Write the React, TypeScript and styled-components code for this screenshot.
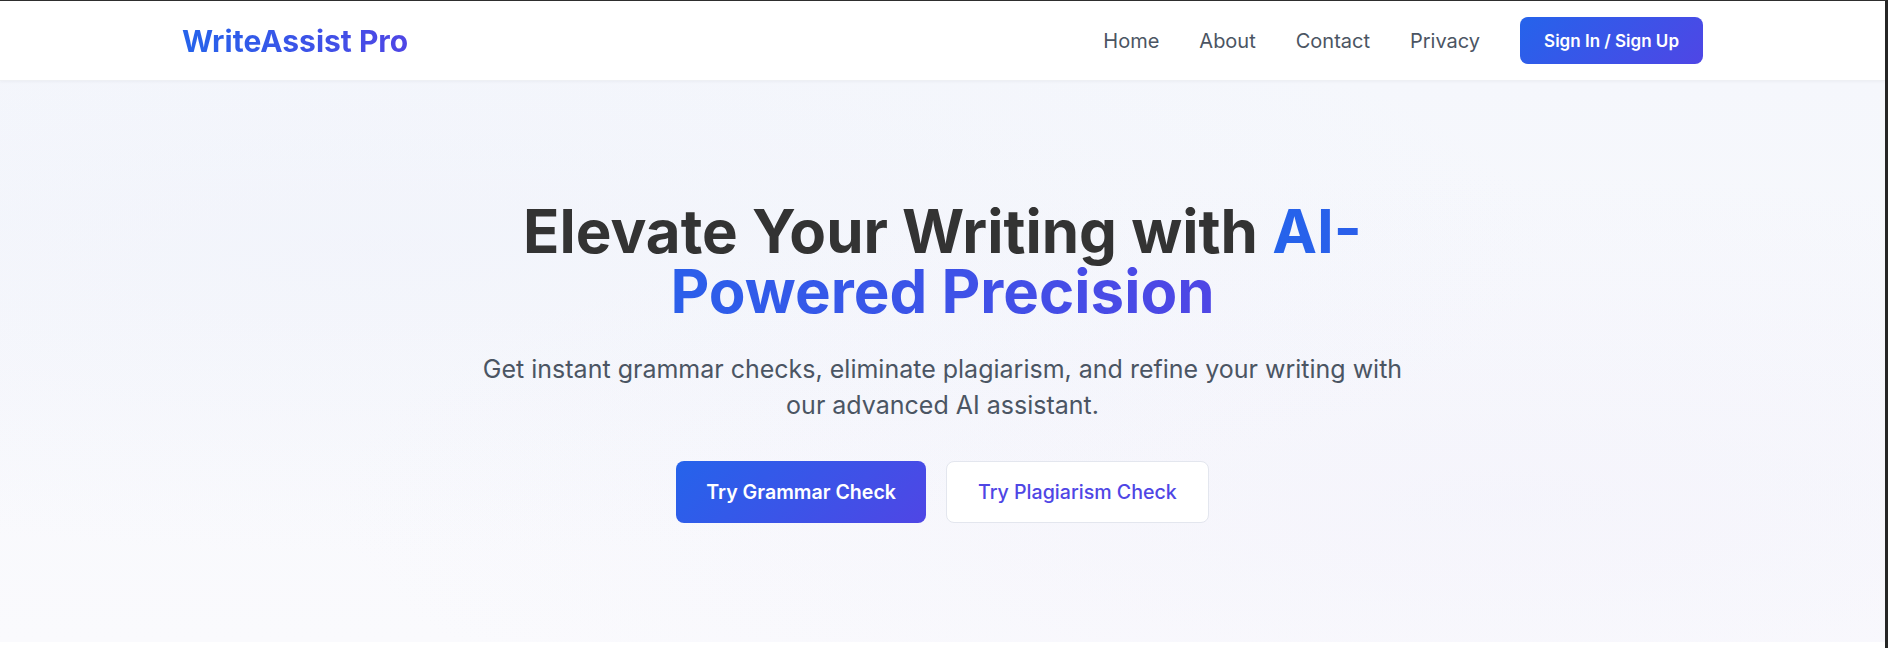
import React from "react";
import styled, { createGlobalStyle } from "styled-components";

const GlobalStyle = createGlobalStyle`
  * {
    box-sizing: border-box;
  }

  html,
  body {
    margin: 0;
    padding: 0;
    background: #ffffff;
  }

  body {
    font-family: Inter, "Noto Sans", "Liberation Sans", sans-serif;
    color: #333333;
    border-top: 1px solid #2e2e2e;
    border-right: 3px solid #262626;
    min-height: 648px;
  }
`;

export default function App() {
  return (
    <>
      <GlobalStyle />
      <Page>
        <Header>
          <HeaderInner>
            <Logo>WriteAssist Pro</Logo>
            <Nav>
              <NavLink href="#">Home</NavLink>
              <NavLink href="#">About</NavLink>
              <NavLink href="#">Contact</NavLink>
              <NavLink href="#">Privacy</NavLink>
              <SignButton>Sign In / Sign Up</SignButton>
            </Nav>
          </HeaderInner>
        </Header>

        <Hero>
          <HeroContent>
            <Title>
              Elevate Your Writing with <Accent>AI-Powered Precision</Accent>
            </Title>
            <Subtitle>
              Get instant grammar checks, eliminate plagiarism, and refine your
              writing with our advanced AI assistant.
            </Subtitle>
            <Actions>
              <PrimaryButton>Try Grammar Check</PrimaryButton>
              <SecondaryButton>Try Plagiarism Check</SecondaryButton>
            </Actions>
          </HeroContent>
        </Hero>
      </Page>
    </>
  );
}

/* ================== Styled Components ================== */

const Page = styled.div`
  width: 100%;
  display: flex;
  flex-direction: column;
`;

const Header = styled.header`
  height: 80px;
  background: #ffffff;
  border-bottom: 1px solid #eef0f4;
  box-shadow: 0 1px 3px rgba(15, 23, 42, 0.04);
  display: flex;
  justify-content: center;
  position: relative;
  z-index: 1;
`;

const HeaderInner = styled.div`
  width: 1521px;
  display: flex;
  align-items: center;
  justify-content: space-between;
`;

const Logo = styled.div`
  font-size: 30px;
  font-weight: 700;
  background: linear-gradient(90deg, #2563eb, #4f46e5);
  -webkit-background-clip: text;
  background-clip: text;
  color: transparent;
`;

const Nav = styled.nav`
  display: flex;
  align-items: center;
  gap: 40px;
`;

const NavLink = styled.a`
  font-size: 20px;
  font-weight: 400;
  color: #4b5563;
  text-decoration: none;
`;

const SignButton = styled.button`
  height: 47px;
  padding: 0 24px;
  border: none;
  border-radius: 8px;
  background: linear-gradient(135deg, #2563eb, #4f46e5);
  color: #ffffff;
  font-family: inherit;
  font-size: 17px;
  font-weight: 600;
  cursor: pointer;
`;

const Hero = styled.section`
  padding: 120px 24px 119px;
  background:
    radial-gradient(ellipse at 20% 30%, rgba(232, 236, 249, 0.3), transparent 55%),
    radial-gradient(ellipse at 80% 75%, rgba(238, 236, 250, 0.35), transparent 55%),
    linear-gradient(180deg, #f5f7fc 0%, #fafafd 100%);
  display: flex;
  justify-content: center;
`;

const HeroContent = styled.div`
  max-width: 960px;
  display: flex;
  flex-direction: column;
  align-items: center;
  text-align: center;
`;

const Title = styled.h1`
  margin: 0 0 30px;
  font-size: 60px;
  line-height: 60px;
  font-weight: 700;
  color: #333333;
`;

const Accent = styled.span`
  background: linear-gradient(90deg, #2563eb, #4f46e5);
  -webkit-background-clip: text;
  background-clip: text;
  color: transparent;
`;

const Subtitle = styled.p`
  max-width: 950px;
  margin: 0 0 38px;
  font-size: 25px;
  line-height: 36px;
  color: #4b5563;
`;

const Actions = styled.div`
  display: flex;
  gap: 20px;
`;

const PrimaryButton = styled.button`
  height: 62px;
  padding: 0 30px;
  border: none;
  border-radius: 8px;
  background: linear-gradient(135deg, #2563eb, #4f46e5);
  color: #ffffff;
  font-family: inherit;
  font-size: 19.6px;
  font-weight: 600;
  cursor: pointer;
`;

const SecondaryButton = styled.button`
  height: 62px;
  padding: 0 31px;
  border: 1px solid #e3e6ee;
  border-radius: 8px;
  background: #ffffff;
  color: #4f46e5;
  font-family: inherit;
  font-size: 19.6px;
  font-weight: 500;
  cursor: pointer;
`;
